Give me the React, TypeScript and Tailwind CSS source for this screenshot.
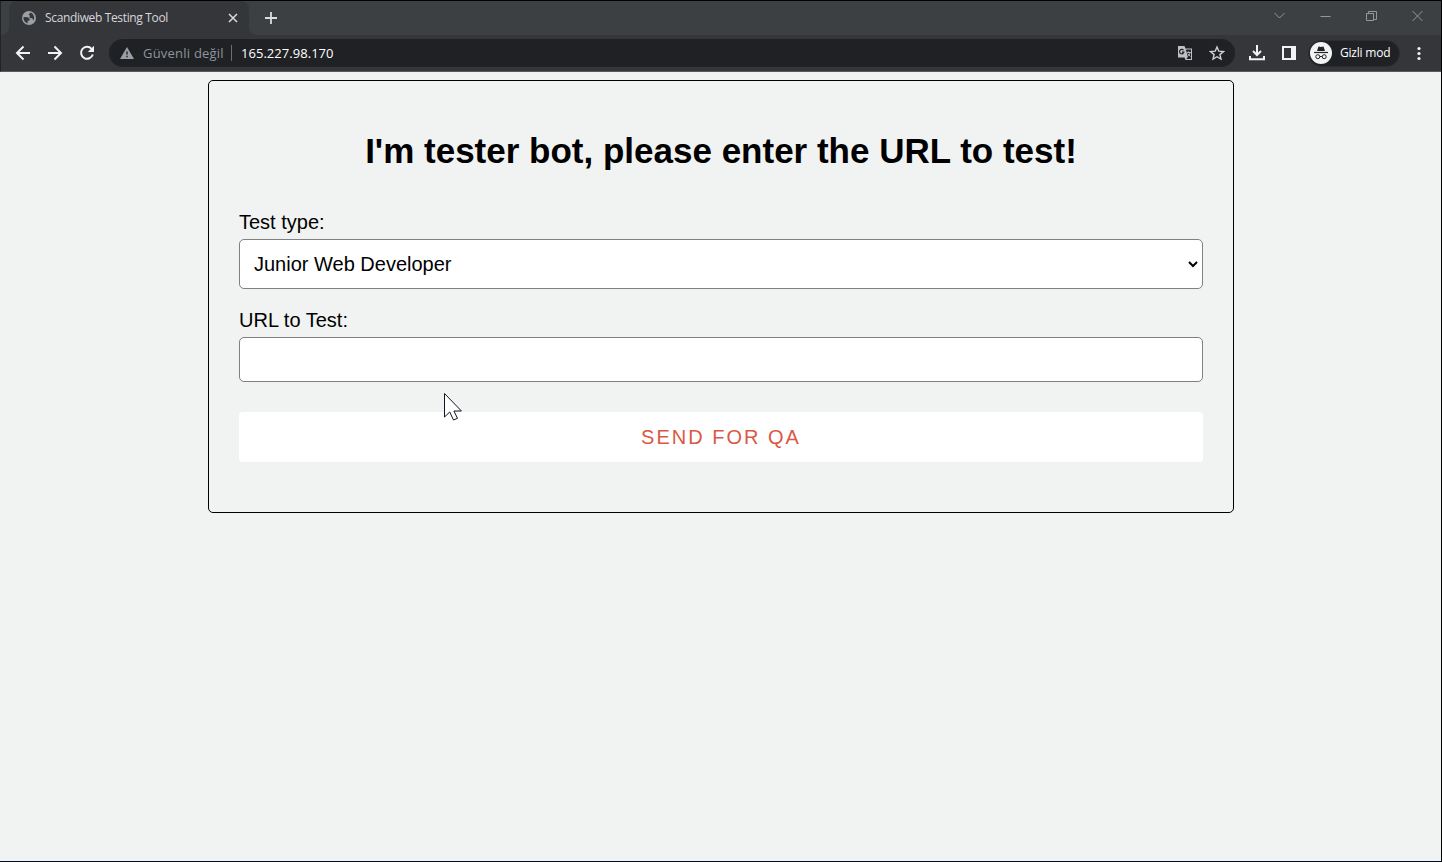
import React from "react";

const ui = "font-['Open_Sans','Noto_Sans',sans-serif]";

function TabStrip() {
  return (
    <div className="flex h-[34px] bg-[#3c4043]">
      <div className="flex w-2 items-end bg-[#35363a]">
        <div className="h-[34px] w-2 rounded-br-lg bg-[#3c4043]" />
      </div>
      <div className="flex h-full w-[240px] items-center rounded-t-lg bg-[#35363a] pl-[13px] pr-[9px]">
        <svg width="14" height="14" viewBox="0 0 14 14" className="shrink-0">
          <circle cx="7" cy="7" r="7" fill="#9aa0a6" />
          <path d="M1.600 6 5.800 6.300l1.900 1.600v1.300l-2 .6v2.500A5.500 5.500 0 0 1 1.600 6ZM8.600 1.600c0 1-1.800 1-1.900 2 0 .8 1.300.5 1.300 1.400 0 .8-1 .8-.7 1.500.5 1 2.900.4 3.400 1.300.2.500.2 1.300.6 1.800a5.500 5.500 0 0 0-2.700-8Z" fill="#35363a" />
        </svg>
        <span className={`ml-[9px] whitespace-nowrap text-[12px] leading-4 tracking-[-0.35px] text-[#d5d7da] ${ui}`}>Scandiweb Testing Tool</span>
        <svg className="ml-auto shrink-0" width="14" height="14" viewBox="0 0 14 14" stroke="#dadce0" strokeWidth="1.500">
          <path d="m3 3 8 8M11 3l-8 8" />
        </svg>
      </div>
      <div className="w-2 bg-[#35363a]">
        <div className="h-full w-2 rounded-bl-lg bg-[#3c4043]" />
      </div>
      <div className="flex flex-1 items-center pl-[7px]">
        <svg width="14" height="14" viewBox="0 0 14 14" stroke="#dadce0" strokeWidth="1.800">
          <path d="M7 1v12M1 7h12" />
        </svg>
      </div>
      <div className="flex h-[28px] items-center text-[#9b9693]">
        {["m1.500 4 5 5 5-5", "M1.500 7.500h10", "M1.500 4.500h7v7h-7zM3.500 4.500v-2h8v8h-3", "m1.500 2 10 10M11.500 2l-10 10"].map((d) => (
          <div key={d} className="flex w-[46px] justify-center pr-px">
            <svg width="13" height="13" viewBox="0 0 13 13" fill="none" stroke="currentColor" strokeWidth="1">
              <path d={d} />
            </svg>
          </div>
        ))}
      </div>
    </div>
  );
}

function Toolbar() {
  return (
    <div className="flex h-[36px] items-center bg-[#35363a] pl-[14px] pr-[14px]">
      <div className="flex shrink-0 gap-4 text-[#f1f3f4]">
        <svg width="16" height="16" viewBox="0 0 16 16" fill="none" stroke="currentColor" strokeWidth="2">
          <path d="M15 8H2.500M8.500 1.500 2 8l6.500 6.500" />
        </svg>
        <svg width="16" height="16" viewBox="0 0 16 16" fill="none" stroke="currentColor" strokeWidth="2">
          <path d="M1 8h12.500M7.500 1.500 14 8l-6.500 6.500" />
        </svg>
        <svg width="16" height="16" viewBox="0 0 16 16" fill="none" stroke="currentColor" strokeWidth="2">
          <path d="M12.600 3.800A6 6 0 1 0 13.800 9.500" />
          <path d="M15 .8V7H8.800Z" fill="currentColor" stroke="none" />
        </svg>
      </div>
      <div className={`ml-[14px] flex h-[28px] w-[1126px] shrink-0 items-center rounded-full bg-[#202124] pl-[11px] pr-[10px] text-[13px] leading-5 ${ui}`}>
        <svg width="14" height="12" viewBox="0 0 14 12" className="shrink-0">
          <path d="M7 0 14 12H0Z" fill="#9aa0a6" />
          <path d="M7 4.500v3M7 8.700v1.500" stroke="#202124" strokeWidth="1.400" />
        </svg>
        <span className="ml-[9px] w-[88px] whitespace-nowrap tracking-[0.22px] text-[#8d959d]">Güvenli değil</span>
        <span className="h-4 w-px bg-[#6c6e72]" />
        <span className="ml-[9px] whitespace-nowrap tracking-[0.04px] text-white">165.227.98.170</span>
        <svg className="ml-auto" width="16" height="16" viewBox="0 0 16 16">
          <path d="M1 1h6.500l1 2.500H15V15H8.500l-1-2.500H1Z" fill="#bdc1c6" />
          <path d="M8.900 4.500H14V14H9.300l1.500-2Z" fill="#202124" />
          <path d="M6.500 5.200A2.200 2.200 0 1 0 6.900 7.200H5" fill="none" stroke="#202124" strokeWidth="1.200" />
          <path d="M9.500 7.500H14M11.800 6.200v1.300M13 7.800c-.5 2-1.500 3-2.500 3.600M10.500 8.500l3 3" fill="none" stroke="#bdc1c6" strokeWidth=".9" />
        </svg>
        <svg className="ml-4" width="16" height="16" viewBox="0 0 16 16" fill="none" stroke="#cfd1d4" strokeWidth="1.400">
          <path d="m8 2 1.800 4.200 4.600.4-3.500 3 1.100 4.500L8 11.700l-4 2.400 1.100-4.500-3.500-3 4.600-.4Z" />
        </svg>
      </div>
      <svg className="ml-[14px] shrink-0" width="16" height="16" viewBox="0 0 16 16" fill="none" stroke="#f1f3f4" strokeWidth="2">
        <path d="M8 0v9.500M4 6l4 4 4-4M1 11v3.200h14V11" />
      </svg>
      <svg className="ml-4 shrink-0" width="16" height="16" viewBox="0 0 16 16">
        <path d="M1 1h14v14H1ZM3 3v10h7V3Z" fillRule="evenodd" fill="#f1f3f4" />
      </svg>
      <div className={`ml-[11px] flex h-[27px] w-[92px] shrink-0 items-center rounded-full border border-[#2c2d31] bg-[#202124] pl-px text-[12px] text-white ${ui}`}>
        <svg width="22" height="22" viewBox="0 0 22 22" className="shrink-0">
          <circle cx="11" cy="11" r="11" fill="#f1f3f4" />
          <path d="M8.500 4.500 11 5l2.500-.5L15 9H7Z" fill="#202124" />
          <path d="M4 10.500h14" stroke="#202124" strokeWidth="1.200" />
          <g fill="none" stroke="#202124" strokeWidth="1"><circle cx="7.800" cy="14.700" r="2" /><circle cx="14.200" cy="14.700" r="2" /><path d="M9.800 14.500h2.400" /></g>
        </svg>
        <span className="ml-2 whitespace-nowrap tracking-[-0.2px]">Gizli mod</span>
      </div>
      <svg className="ml-auto shrink-0" width="16" height="16" viewBox="0 0 16 16" fill="#f1f3f4">
        <circle cx="8" cy="3.500" r="1.600" /><circle cx="8" cy="8.500" r="1.600" /><circle cx="8" cy="13.500" r="1.600" />
      </svg>
    </div>
  );
}

export default function App() {
  return (
    <div className="flex h-[862px] w-[1442px] flex-col overflow-hidden border-b border-r border-t border-b-[#050d20] border-r-black border-t-black bg-[#f0f3f2]">
      <header className="border-b border-b-[#5a5b5f] border-l border-l-[#222327]">
        <TabStrip />
        <Toolbar />
      </header>
      <main className="relative pl-[208px] pt-2 font-['Liberation_Sans',Arial,sans-serif] text-[20px] leading-[23px] text-black">
        <section className="flex h-[433px] w-[1026px] flex-col rounded-[5px] border border-black px-[30px]">
          <h1 className="mt-[50px] text-center text-[35px] font-bold leading-[40px]">I'm tester bot, please enter the URL to test!</h1>
          <label className="mt-[40px]">Test type:</label>
          <div className="mt-[5px] flex h-[50px] shrink-0 items-center justify-between rounded-[5px] border border-[#808080] bg-white pl-[14px] pr-[4px]">
            <span>Junior Web Developer</span>
            <svg width="10" height="8" viewBox="0 0 10 8" fill="none" stroke="black" strokeWidth="2">
              <path d="m1 2 4 4 4-4" />
            </svg>
          </div>
          <label className="mt-[20px]">URL to Test:</label>
          <input aria-label="URL" className="mt-[5px] h-[45px] shrink-0 rounded-[5px] border border-[#808080] bg-white px-3 outline-none" />
          <button className="mt-[30px] h-[50px] shrink-0 rounded-[4px] bg-white tracking-[2px] text-[#db5846]">SEND FOR QA</button>
        </section>
        <svg className="absolute left-[444px] top-[321px]" width="19" height="28" viewBox="0 0 19 28">
          <path d="M.500.500v23.500l5.200-5 3.800 8 4-1.700-3.600-7.300h7.500Z" fill="white" stroke="#101522" />
        </svg>
      </main>
    </div>
  );
}
